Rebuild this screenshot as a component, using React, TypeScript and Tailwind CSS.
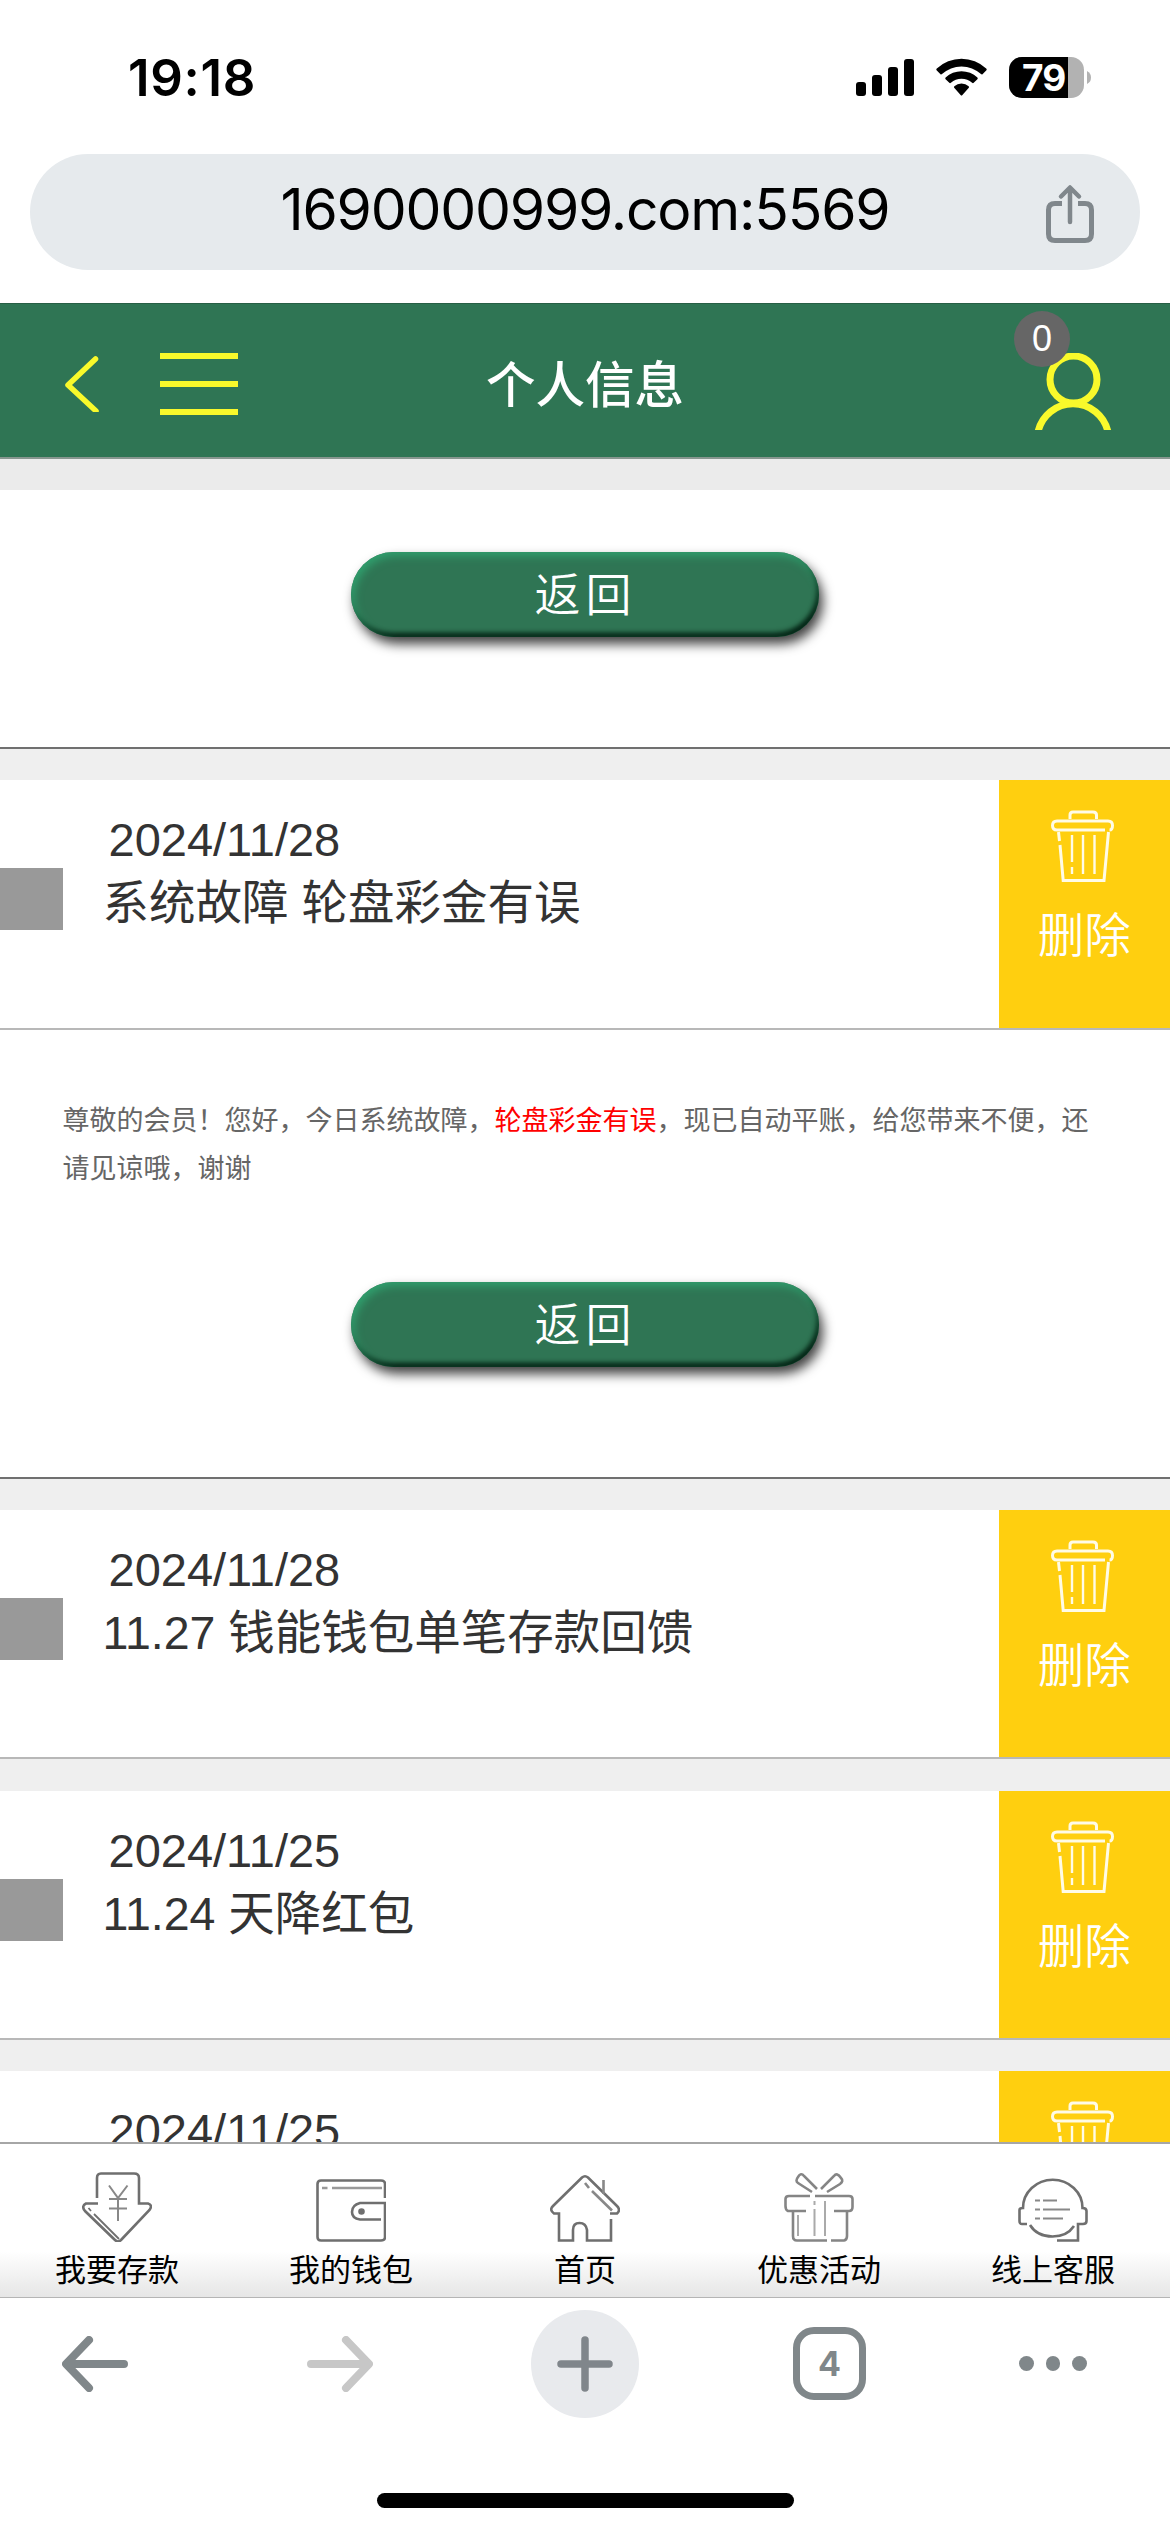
import React from 'react';

interface Message {
  id: number;
  date: string;
  title: string;
  open?: boolean;
}

const messages: Message[] = [
  { id: 1, date: '2024/11/28', title: '系统故障 轮盘彩金有误', open: true },
  { id: 2, date: '2024/11/28', title: '11.27 钱能钱包单笔存款回馈' },
  { id: 3, date: '2024/11/25', title: '11.24 天降红包' },
  { id: 4, date: '2024/11/25', title: '11.24 天降红包' }
];

const StatusBar: React.FC = () => (
  <div className="h-[154px] flex justify-between pl-[128px] pr-[79px] pt-[57px] font-['Inter',sans-serif]">
    <span className="text-[51px] leading-[42px] font-semibold tracking-[0.7px] text-black">19:18</span>
    <div className="flex items-start">
      <svg width="58" height="42" viewBox="0 0 58 42" className="mr-[22px]">
        <rect x="0" y="25" width="10" height="14" rx="3" />
        <rect x="16" y="18" width="10" height="21" rx="3" />
        <rect x="32" y="10" width="10" height="29" rx="3" />
        <rect x="48" y="2" width="10" height="37" rx="3" />
      </svg>
      <svg width="51" height="42" viewBox="0 0 51 42" className="mr-[22px]">
        <path d="M0.8 11.6Q-0.2 12.6 0.8 13.6L4.5 17.2Q5.2 17.8 6 17.1A28.5 28.5 0 0 1 45 17.1Q45.8 17.8 46.5 17.2L50.2 13.6Q51.2 12.6 50.2 11.6A36 36 0 0 0 0.8 11.6Z" />
        <path d="M9.6 20.4Q8.8 21.3 9.6 22.2L13.3 25.8Q14 26.5 14.9 25.8A16 16 0 0 1 36.1 25.8Q37 26.5 37.7 25.8L41.4 22.2Q42.2 21.3 41.4 20.4A23.5 23.5 0 0 0 9.6 20.4Z" />
        <path d="M18.3 29.2Q17.5 30.2 18.4 31.1L24.6 38Q25.5 39 26.4 38L32.6 31.1Q33.5 30.2 32.7 29.2A11 11 0 0 0 18.3 29.2Z" />
      </svg>
      <div className="relative h-[41px] w-[75px] rounded-[13px] bg-[#b2b2b2]">
        <div className="h-full w-[59px] rounded-l-[13px] bg-black" />
        <span className="absolute left-[13px] top-0 text-[37px] leading-[41px] font-bold tracking-[-1px] text-white">79</span>
      </div>
      <svg width="7" height="41" viewBox="0 0 7 41">
        <path d="M3 14Q7 16 7 20.5T3 27Z" fill="#b2b2b2" />
      </svg>
    </div>
  </div>
);

const AddressBar: React.FC = () => (
  <div className="h-[149px] px-[30px]">
    <div className="relative flex h-[116px] items-center justify-center rounded-full bg-[#e6eaed]">
      <span className="mt-[-5px] text-[57px] leading-[70px] tracking-[-1.2px] text-black font-['Inter',sans-serif]">1690000999.com:5569</span>
      <svg width="50" height="60" viewBox="0 0 50 60" className="absolute right-[45px] top-[30px]" fill="none" stroke="#80878c" strokeWidth="5" strokeLinecap="round" strokeLinejoin="round">
        <path d="M17 19.5H10Q3.5 19.5 3.5 26V50Q3.5 56.5 10 56.5H40Q46.5 56.5 46.5 50V26Q46.5 19.5 40 19.5H33" strokeLinecap="butt" />
        <path d="M25 38V4M16 12.5L25 3.5L34 12.5" strokeWidth="4.5" />
      </svg>
    </div>
  </div>
);

const PageHeader: React.FC = () => (
  <header className="grid h-[156px] grid-cols-3 border-t border-b-2 border-t-[#285f45] border-b-[#87968f] bg-[#2f7554]">
    <div className="flex items-start pl-[65px]">
      <svg width="34" height="56" viewBox="0 0 34 56" className="mt-[52px]" fill="none" stroke="#f9f92b" strokeWidth="5.5" strokeLinejoin="round" strokeLinecap="round">
        <path d="M30.5 3L3 29L31 55" />
      </svg>
      <div className="ml-[61px] mt-[49px] flex w-[78px] flex-col gap-[22px]">
        <div className="h-[6px] bg-[#f9f92b]" />
        <div className="h-[6px] bg-[#f9f92b]" />
        <div className="h-[6px] bg-[#f9f92b]" />
      </div>
    </div>
    <h1 className="pt-[43px] text-center text-[49.5px] leading-[78px] font-medium text-white">个人信息</h1>
    <div className="relative">
      <svg width="78" height="77" viewBox="0 0 78 77" className="absolute right-[58px] top-[49px]" fill="none" stroke="#f9f92b" strokeWidth="7">
        <circle cx="39.5" cy="26.500" r="23.5" />
        <path d="M4 79A35.800 35.800 0 0 1 74 79" />
      </svg>
      <span className="absolute right-[100px] top-[7px] flex h-[56px] w-[56px] items-center justify-center rounded-full bg-[#666] text-[36px] leading-none text-white">0</span>
    </div>
  </header>
);

const BackButton: React.FC = () => (
  <button className="mx-auto block h-[85px] w-[468px] rounded-full bg-[#2f7554] pl-[1px] text-center text-[46px] leading-[86px] font-[350] tracking-[5px] text-white shadow-[inset_3px_4px_8px_#30a06e,inset_-2px_-4px_5px_#001a0e,4px_7px_12px_rgba(0,0,0,0.75)]">
    返回
  </button>
);

const TrashIcon: React.FC = () => (
  <svg width="63" height="73" viewBox="0 0 63 73" fill="none" stroke="#fffbe6" strokeWidth="3">
    <path d="M19 9V5Q19 2 22 2H42Q45.500 2 45.500 5V9" />
    <path d="M54 20H6Q1.500 20 1.500 15.500T6 11H57Q61.500 11 61.500 15.500Q61.500 20 58.500 20" />
    <path d="M7.500 22L8.500 31M9 35L12.200 70.500H53L57.500 22" />
    <path d="M21 25V52M21 57V64M32 25V64M43.500 25V64" strokeWidth="2.4" />
  </svg>
);

const MessageRow: React.FC<{ message: Message }> = ({ message }) => (
  <div className="flex h-[249.5px] shrink-0 justify-between border-b-2 border-[#b8b8b8] bg-white text-[46.5px] text-[#333]">
    <div className="flex">
      <div className="mt-[88px] h-[62px] w-[62.5px] bg-[#999]" />
      <div className="pl-[40px] pt-[28px]">
        <div className="pl-[6px] text-[47px] leading-[64px]">{message.date}</div>
        <div className="leading-[63px]">{message.title}</div>
      </div>
    </div>
    <div className="flex w-[171.5px] flex-col items-center bg-[#ffcf0f] pt-[30px] text-white">
      <div className="h-[73px] pr-[4px]"><TrashIcon /></div>
      <span className="mt-[20px] leading-[66px] font-[350]">删除</span>
    </div>
  </div>
);

const Spacer: React.FC = () => <div className="h-[31.2px] shrink-0 bg-[#efefef]" />;

const iconProps = {
  width: 70,
  height: 70,
  viewBox: '0 0 70 70',
  fill: 'none',
  stroke: '#6f6f6f',
  strokeWidth: 2.6
};

const DepositIcon = () => (
  <svg {...iconProps}>
    <path d="M15 26V6Q15 1.500 19 1.500H52Q57 1.500 57 6V31.500H66Q71 33 67.500 38L39 68Q36 71 33 68L3 39Q-1 34 4 31.500H16" />
    <path d="M6.500 36L9 39M12 42L37 67" strokeWidth="1.800" />
    <path d="M27 13.500L36 26L45.500 13.500M36 26V49M27 27H45M27 36.500H45" stroke="#888" strokeWidth="2" />
  </svg>
);

const WalletIcon = () => (
  <svg {...iconProps}>
    <path d="M69 26V12Q69 8.500 65 8.500H5Q1.500 8.500 1.500 12V65Q1.500 68.500 5 68.500H65Q69 68.500 69 65V31H44Q36 33 36 40Q36 46.500 44 47.500H65" />
    <path d="M6 16H11.500M16 16H66" stroke="#999" />
    <circle cx="45.500" cy="39.500" r="2" fill="#6f6f6f" />
  </svg>
);

const HomeIcon = () => (
  <svg {...iconProps}>
    <path d="M61 47V68.500H37V58Q36 51 29.500 51T23 58V68.500H9V41.500H4Q-1 38 3 34L32 5.500Q35 3 38 5.500L67 34Q71 38 67 41.500H60" />
    <path d="M35 11L39 16M42 19L62 38.500M53.500 8V22" stroke="#888" />
  </svg>
);

const GiftIcon = () => (
  <svg {...iconProps} stroke="#858585">
    <path d="M22 39H4Q1.500 38 1.500 34V27Q1.500 24 5 24H26M31 24H65Q68.500 24 68.500 27V35Q68.500 39 65 39H50M9 39V64Q9 68.500 13 68.500H43M47 68.500H60Q63 68 63 64V39" />
    <path d="M28 20L14 11Q11 9 14 5Q17 0 20 4L33 17M37 17L50 4Q53 0 57 6Q60 9 56 12L43 20" />
    <path d="M14 43V64M30.500 29V33M30.500 37V64M41 29V64" stroke="#aaa" strokeWidth="2" />
  </svg>
);

const ServiceIcon = () => (
  <svg {...iconProps}>
    <path d="M9 52H4Q1.500 52 1.500 49V38Q1.500 36 5 36A29.500 28 0 0 1 64.500 36Q68.500 36 68.500 39V49Q68.500 52 65 52H60V68.500H39" />
    <path d="M12 53Q19 64.500 34.500 64.500Q49 64.500 56 54" />
    <path d="M17 28.500H22M25 28.500H39M17 37.500H22M25 37.500H52M17 46.500H22M25 46.500H45" stroke="#888" strokeWidth="2" />
  </svg>
);

const tabs = [
  { label: '我要存款', icon: <DepositIcon /> },
  { label: '我的钱包', icon: <WalletIcon /> },
  { label: '首页', icon: <HomeIcon /> },
  { label: '优惠活动', icon: <GiftIcon /> },
  { label: '线上客服', icon: <ServiceIcon /> }
];

const TabBar: React.FC = () => (
  <nav className="grid h-[156px] grid-cols-5 border-b border-t-2 border-b-[#b5b5b5] border-t-[#a6a6a6] bg-linear-to-b from-white from-70% to-[#e6e6e6]">
    {tabs.map((tab) => (
      <div key={tab.label} className="flex flex-col items-center pt-[28px]">
        {tab.icon}
        <span className="mt-[7px] text-[31px] leading-[44px] text-black">{tab.label}</span>
      </div>
    ))}
  </nav>
);

const BrowserToolbar: React.FC = () => (
  <div className="flex h-[234px] flex-col items-center justify-between bg-white pb-[24px] pt-[11px]">
    <div className="flex h-[109px] w-full items-center pl-[62px]">
      <svg width="66" height="56" viewBox="0 0 66 56" fill="none" stroke="#80878a" strokeWidth="8" strokeLinecap="round" strokeLinejoin="round">
        <path d="M62 28H5M27 4L4 28L27 52" />
      </svg>
      <svg width="66" height="56" viewBox="0 0 66 56" className="ml-[179px]" fill="none" stroke="#c7c7c7" strokeWidth="8" strokeLinecap="round" strokeLinejoin="round">
        <path d="M4 28H61M39 4L62 28L39 52" />
      </svg>
      <div className="ml-[158px] flex h-[108px] w-[108px] items-center justify-center rounded-full bg-[#e8eaed]">
        <svg width="56" height="56" viewBox="0 0 56 56" stroke="#80868b" strokeWidth="7.500" strokeLinecap="round">
          <path d="M28 4V52M4 28H52" />
        </svg>
      </div>
      <div className="ml-[154px] flex h-[73px] w-[73px] items-center justify-center rounded-[21px] border-[7px] border-[#80878a] text-[34px] leading-none font-bold text-[#80878a] font-['Inter',sans-serif]">4</div>
      <div className="ml-[153px] flex gap-[12px]">
        <div className="h-[14.5px] w-[14.5px] rounded-full bg-[#80878a]" />
        <div className="h-[14.5px] w-[14.5px] rounded-full bg-[#80878a]" />
        <div className="h-[14.5px] w-[14.5px] rounded-full bg-[#80878a]" />
      </div>
    </div>
    <div className="h-[15px] w-[417px] rounded-full bg-black" />
  </div>
);

const App: React.FC = () => {
  return (
    <div className="flex h-[2532px] w-[1170px] flex-col overflow-hidden bg-white font-['Liberation_Sans','Noto_Sans_CJK_SC',sans-serif]">
      <StatusBar />
      <AddressBar />
      <PageHeader />

      <main className="flex h-[1683px] flex-col overflow-hidden">
        <div className="h-[31px] shrink-0 bg-[#ebebeb]" />
        <div className="h-[259px] shrink-0 border-b-2 border-[#707070] pt-[62px]">
          <BackButton />
        </div>

        {messages.map((message) => (
          <React.Fragment key={message.id}>
            <Spacer />
            <MessageRow message={message} />
            {message.open && (
              <div className="h-[449px] shrink-0 border-b-2 border-[#707070] px-[62.5px] pt-[67px]">
                <p className="mb-[89px] text-[27px] leading-[48px] text-[#666]">
                  尊敬的会员！您好，今日系统故障，<span className="text-[#f00]">轮盘彩金有误</span>，现已自动平账，给您带来不便，还请见谅哦，谢谢
                </p>
                <BackButton />
              </div>
            )}
          </React.Fragment>
        ))}
      </main>

      <TabBar />
      <BrowserToolbar />
    </div>
  );
};

export default App;
